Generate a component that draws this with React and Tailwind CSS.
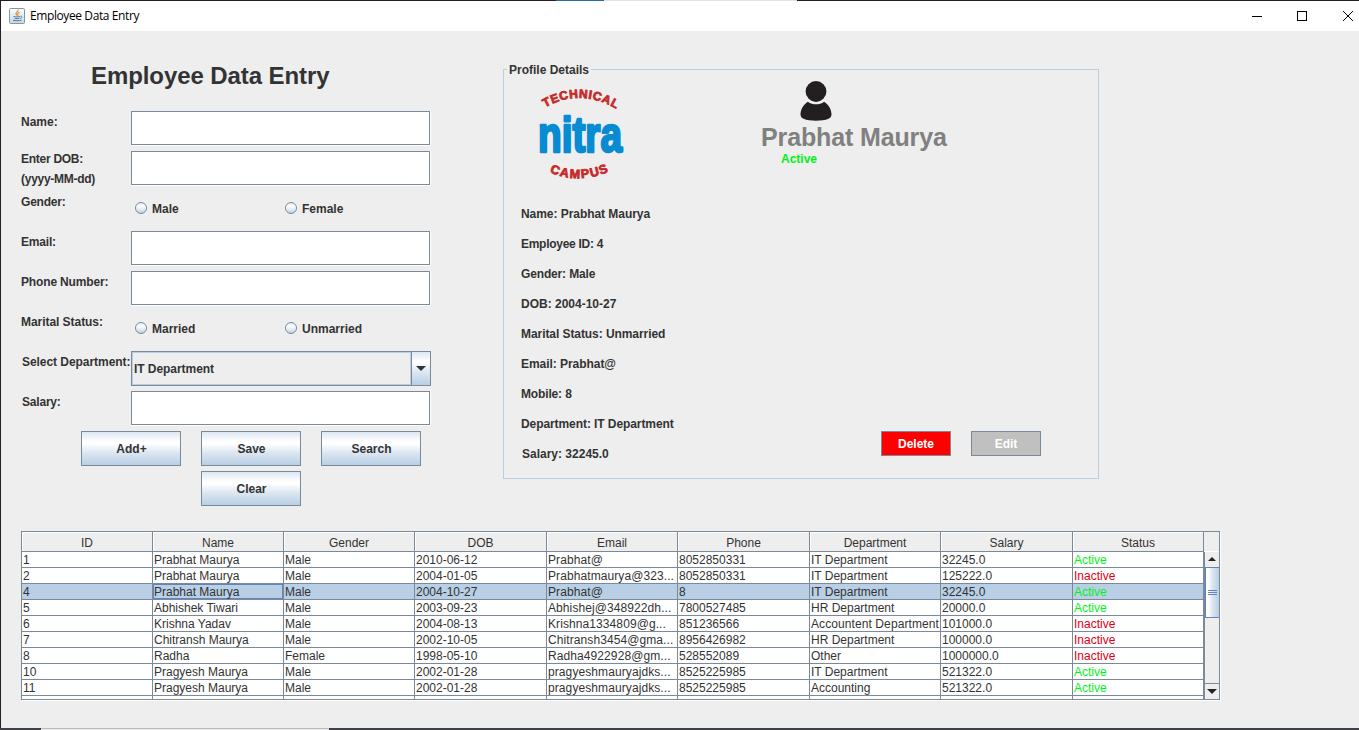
import React from "react";

const columns = ["ID", "Name", "Gender", "DOB", "Email", "Phone", "Department", "Salary", "Status"];

const rows = [
  ["1", "Prabhat Maurya", "Male", "2010-06-12", "Prabhat@", "8052850331", "IT Department", "32245.0", "Active"],
  ["2", "Prabhat Maurya", "Male", "2004-01-05", "Prabhatmaurya@323...", "8052850331", "IT Department", "125222.0", "Inactive"],
  ["4", "Prabhat Maurya", "Male", "2004-10-27", "Prabhat@", "8", "IT Department", "32245.0", "Active"],
  ["5", "Abhishek Tiwari", "Male", "2003-09-23", "Abhishej@348922dh...", "7800527485", "HR Department", "20000.0", "Active"],
  ["6", "Krishna Yadav", "Male", "2004-08-13", "Krishna1334809@g...", "851236566", "Accountent Department", "101000.0", "Inactive"],
  ["7", "Chitransh Maurya", "Male", "2002-10-05", "Chitransh3454@gma...", "8956426982", "HR Department", "100000.0", "Inactive"],
  ["8", "Radha", "Female", "1998-05-10", "Radha4922928@gm...", "528552089", "Other", "1000000.0", "Inactive"],
  ["10", "Pragyesh Maurya", "Male", "2002-01-28", "pragyeshmauryajdks...", "8525225985", "IT Department", "521322.0", "Active"],
  ["11", "Pragyesh Maurya", "Male", "2002-01-28", "pragyeshmauryajdks...", "8525225985", "Accounting", "521322.0", "Active"],
];

const details = [
  ["Name: Prabhat Maurya", "tracking-[-0.050px]"],
  ["Employee ID: 4", "tracking-[-0.280px]"],
  ["Gender: Male", "tracking-[-0.150px]"],
  ["DOB: 2004-10-27", ""],
  ["Marital Status: Unmarried", "tracking-[-0.070px]"],
  ["Email: Prabhat@", "tracking-[-0.050px]"],
  ["Mobile: 8", "tracking-[-0.150px]"],
  ["Department: IT Department", "tracking-[-0.080px]"],
  ["Salary: 32245.0", "pl-px"],
];

const GRID = "grid grid-cols-[131px_131px_131px_132px_131px_132px_131px_132px_131px]";

function JavaIcon() {
  return (
    <svg width="16" height="16" viewBox="0 0 16 16" fill="none">
      <defs>
        <linearGradient id="jbg" x1="0" y1="0" x2="0" y2="1">
          <stop offset="0" stopColor="#fbfcfd" />
          <stop offset="1" stopColor="#c9d8e2" />
        </linearGradient>
      </defs>
      <rect x="0.5" y="0.5" width="15" height="15" rx="1" fill="url(#jbg)" stroke="#7d96a8" />
      <path d="M9.2 1.800c.6 1.600-2.600 2.300-2.300 3.800.1.700.8 1 .9 1.700M10.600 4.200c-1.300.5-2.300 1.200-1.800 2 .3.500.3 1-.3 1.400" stroke="#e8812c" strokeWidth="1.100" />
      <path d="M4.500 8.500c2 .6 5 .5 6.500 0M5.500 10.300c1.500.5 3.500.5 5 0M11.500 8.200c1.800-.3 1.900 1.600-.2 2.300M4 12.300c2.500.6 6 .6 8.500-.1" stroke="#4d7a99" />
    </svg>
  );
}

function NitraLogo() {
  return (
    <svg width="90" height="100" viewBox="535 84 90 100" className="overflow-visible">
      <defs>
        <path id="archTop" d="M545 107.500 Q581 87 618 110" />
        <path id="archBottom" d="M549.500 172 Q580 185.500 612 170" />
      </defs>
      <g fontFamily="'Liberation Sans', sans-serif" fontWeight="700">
        <g fill="#c62a28" stroke="#c62a28" strokeWidth="0.800">
          <text fontSize="12"><textPath href="#archTop" textLength="75" lengthAdjust="spacing">TECHNICAL</textPath></text>
          <text fontSize="12.500"><textPath href="#archBottom" textLength="61" lengthAdjust="spacing">CAMPUS</textPath></text>
        </g>
        <text x="538" y="152" fontSize="50" textLength="84" lengthAdjust="spacingAndGlyphs" fill="#078bd3" stroke="#078bd3" strokeWidth="2.600" strokeLinejoin="round">nitra</text>
      </g>
    </svg>
  );
}

function PersonIcon() {
  return (
    <svg width="32" height="40" viewBox="0 0 32 40" fill="#231f20">
      <circle cx="16" cy="10.500" r="10.400" />
      <path d="M7.800 20.700C10.300 22.600 13 23.300 16 23.300s5.700-.7 8.200-2.600C28.500 23.500 31.500 28.500 31.500 33.500c0 2-1 3.300-3 4.300C25.300 39.200 20.500 39.700 16 39.700s-9.300-.5-12.500-1.900c-2-1-3-2.300-3-4.300 0-5 3-10 7.300-12.800z" />
    </svg>
  );
}

function Field() {
  return (
    <div className="h-[35px] w-[300px] border-b border-r border-white">
      <input className="block h-[34px] w-[299px] border border-[#7a8a99] bg-white px-1 outline-none" />
    </div>
  );
}

function Radio({ label }) {
  return (
    <label className="flex h-[35px] w-[150px] items-center pl-1">
      <svg width="12" height="12" viewBox="0 0 12 12" className="mb-px mr-[5px]">
        <defs>
          <linearGradient id="radioFill" x1="0" y1="0" x2="0" y2="1">
            <stop offset="0" stopColor="#dde8f3" />
            <stop offset="0.350" stopColor="#ffffff" />
            <stop offset="1" stopColor="#b8cfe5" />
          </linearGradient>
        </defs>
        <circle cx="6" cy="6" r="5.500" fill="url(#radioFill)" stroke="#7a8a99" />
      </svg>
      <span className="pt-px">{label}</span>
    </label>
  );
}

function FormRow({ label, labelClass = "", children }) {
  return (
    <div className="flex h-10">
      <div className={"h-[22px] w-[110px] shrink-0 whitespace-nowrap leading-[22px] " + labelClass}>{label}</div>
      <div className="flex w-[300px]">{children}</div>
    </div>
  );
}

function MetalButton({ children }) {
  return (
    <button className="h-[35px] w-[100px] border border-[#7a8a99] bg-[linear-gradient(to_bottom,#dde8f3_0%,#ffffff_30%,#ffffff_36%,#dde7f1_62%,#b8cfe5_100%)] pl-px font-bold">
      {children}
    </button>
  );
}

function EntryForm() {
  return (
    <section className="w-[502px] shrink-0 pl-5">
      <h1 className="flex h-20 items-center pl-[70px] pt-[9px] text-[24px] leading-none tracking-[-0.080px]">Employee Data Entry</h1>
      <FormRow label="Name:"><Field /></FormRow>
      <FormRow label={<div className="-mt-0.5 leading-5">Enter DOB:<br />(yyyy-MM-dd)</div>} labelClass="tracking-[-0.270px]"><Field /></FormRow>
      <FormRow label="Gender:" labelClass="tracking-[-0.200px]"><Radio label="Male" /><Radio label="Female" /></FormRow>
      <FormRow label="Email:" labelClass="tracking-[-0.200px]"><Field /></FormRow>
      <FormRow label="Phone Number:" labelClass="tracking-[-0.150px]"><Field /></FormRow>
      <FormRow label="Marital Status:" labelClass="tracking-[-0.050px]"><Radio label="Married" /><Radio label="Unmarried" /></FormRow>
      <FormRow label="Select Department:" labelClass="pl-px tracking-[-0.050px]">
        <div className="flex h-[35px] w-[300px] border border-[#7a8a99]">
          <div className="flex w-[279px] items-center border border-[#b8cfe5] pl-px tracking-[-0.050px]">IT Department</div>
          <div className="flex flex-1 items-center justify-center border-l border-[#7a8a99] bg-[linear-gradient(to_bottom,#dde8f3_0%,#ffffff_30%,#dde7f1_60%,#b8cfe5_100%)]">
            <svg width="10" height="5" viewBox="0 0 10 5"><path d="M0 0h10L5 5z" fill="#333" /></svg>
          </div>
        </div>
      </FormRow>
      <FormRow label="Salary:" labelClass="pl-px tracking-[-0.200px]"><Field /></FormRow>
      <div className="flex w-[400px] flex-wrap justify-center gap-x-5 gap-y-[5px] pl-[60px]">
        <MetalButton>Add+</MetalButton>
        <MetalButton>Save</MetalButton>
        <MetalButton>Search</MetalButton>
        <MetalButton>Clear</MetalButton>
      </div>
    </section>
  );
}

function Profile() {
  return (
    <fieldset className="mt-[30px] h-[418px] w-[596px] border border-[#b8cfe5]">
      <legend className="ml-[3px] h-[16px] px-0.5 leading-[18px]">Profile Details</legend>
      <div className="flex h-[122px] pl-[31px] pt-[7px]">
        <NitraLogo />
        <div className="ml-[133px]">
          <div className="-mt-[3px] ml-[42px]"><PersonIcon /></div>
          <div className="mt-[2px] pl-[3px] text-[25px] leading-[28px] tracking-[-0.130px] text-[#808080]">Prabhat Maurya</div>
          <div className="ml-[23px] mt-px leading-[15px] text-[#00f218]">Active</div>
        </div>
      </div>
      <div className="flex justify-between pl-[17px] pr-[57px]">
        <div>
          {details.map(([text, cls]) => (
            <div key={text} className={"h-[30px] leading-[30px] " + cls}>{text}</div>
          ))}
        </div>
        <div className="mb-[13px] flex items-end gap-5 text-white">
          <button className="h-[25px] w-[70px] border border-[#7a8a99] bg-[#ff0000] font-bold">Delete</button>
          <button className="h-[25px] w-[70px] border border-[#7a8a99] bg-[#c0c0c0] font-bold">Edit</button>
        </div>
      </div>
    </fieldset>
  );
}

function EmployeeTable() {
  return (
    <div className="flex h-[169px] w-[1199px] overflow-hidden border border-[#7a8a99] font-normal shadow-[1px_1px_0_#fff]">
      <div className="w-[1182px] shrink-0 bg-white">
        <div className={GRID + " h-5"}>
          {columns.map((c) => (
            <div key={c} className="border-b border-r border-[#7a8a99] bg-[#eee] pt-[3px] text-center leading-4 shadow-[inset_1px_1px_0_#fff]">{c}</div>
          ))}
        </div>
        {rows.map((r, i) => (
          <div key={r[0]} className={GRID + " h-4 " + (i === 2 ? "bg-[#b8cfe5]" : "")}>
            {r.map((v, j) => {
              const color = j < 8 ? "" : v === "Active" ? "text-[#00f218]" : "text-[#e00014]";
              const focus = i === 2 && j === 1 ? "shadow-[inset_0_0_0_1px_#6382bf]" : "";
              const spacing = j === 4 || v === "Accountent Department" ? "tracking-[0.090px]" : "";
              return (
                <div key={j} className={"overflow-hidden whitespace-nowrap border-b border-r border-[#7a8a99] pl-px leading-4 " + color + " " + focus + " " + spacing}>{v}</div>
              );
            })}
          </div>
        ))}
        <div className={GRID + " h-[3px]"}>
          {columns.map((c) => <div key={c} className="border-r border-[#7a8a99]" />)}
        </div>
      </div>
      <div className="flex flex-1 flex-col bg-[#eee]">
        <div className="h-5 border-b border-white" />
        <div className="flex flex-1 flex-col border-l border-[#7a8a99]">
          <div className="flex h-[15px] items-center justify-center pb-0.5">
            <svg width="8" height="4" viewBox="0 0 8 4"><path d="M4 0l4 4H0z" fill="#222" /></svg>
          </div>
          <div className="flex h-[51px] flex-col items-center justify-center gap-px border border-r-0 border-[#6382bf] bg-[linear-gradient(to_right,#ffffff_0%,#ffffff_20%,#dde8f3_45%,#b8cfe5_100%)]">
            <div className="h-px w-[9px] bg-[#6382bf]" />
            <div className="h-px w-[9px] bg-[#6382bf]" />
            <div className="h-px w-[9px] bg-[#6382bf]" />
          </div>
          <div className="flex-1" />
          <div className="flex h-[16px] items-center justify-center border-t border-[#7a8a99]">
            <svg width="10" height="5" viewBox="0 0 10 5"><path d="M0 0h10L5 5z" fill="#222" /></svg>
          </div>
        </div>
      </div>
    </div>
  );
}

export default function App() {
  return (
    <div className="flex h-[730px] w-[1359px] flex-col overflow-hidden bg-white font-['Liberation_Sans',Arial,sans-serif] text-[12px] font-bold text-[#333]">
      <div className="flex h-px shrink-0 bg-[#231f24]">
        <div className="ml-[556px] w-12 bg-[#2b6ca0]" />
        <div className="w-[193px] bg-[#e4e4e4]" />
      </div>
      <header className="flex h-[30px] shrink-0 items-center border-l border-[#231f24] bg-white pl-2">
        <JavaIcon />
        <span className="ml-[5px] font-['Open_Sans','Noto_Sans',sans-serif] text-[12px] font-normal tracking-[-0.400px] text-black">Employee Data Entry</span>
        <div className="ml-auto flex items-center">
          <svg width="108" height="12" viewBox="0 0 108 12" fill="none" stroke="#000" shapeRendering="crispEdges">
            <path d="M1 6.500h10" />
            <rect x="46.500" y="1.500" width="9" height="9" />
            <path d="M92 1l10 10M102 1l-10 10" shapeRendering="auto" />
          </svg>
        </div>
      </header>
      <main className="flex flex-1 flex-col border-l border-[#231f24] bg-[#eee]">
        <div className="flex h-[500px]">
          <EntryForm />
          <Profile />
        </div>
        <div className="pl-5">
          <EmployeeTable />
        </div>
      </main>
      <div className="flex h-0.5 shrink-0 bg-[#3f4146]">
        <div className="ml-[41px] w-[288px] border-t border-[#bbb] bg-[#eee]" />
      </div>
    </div>
  );
}
